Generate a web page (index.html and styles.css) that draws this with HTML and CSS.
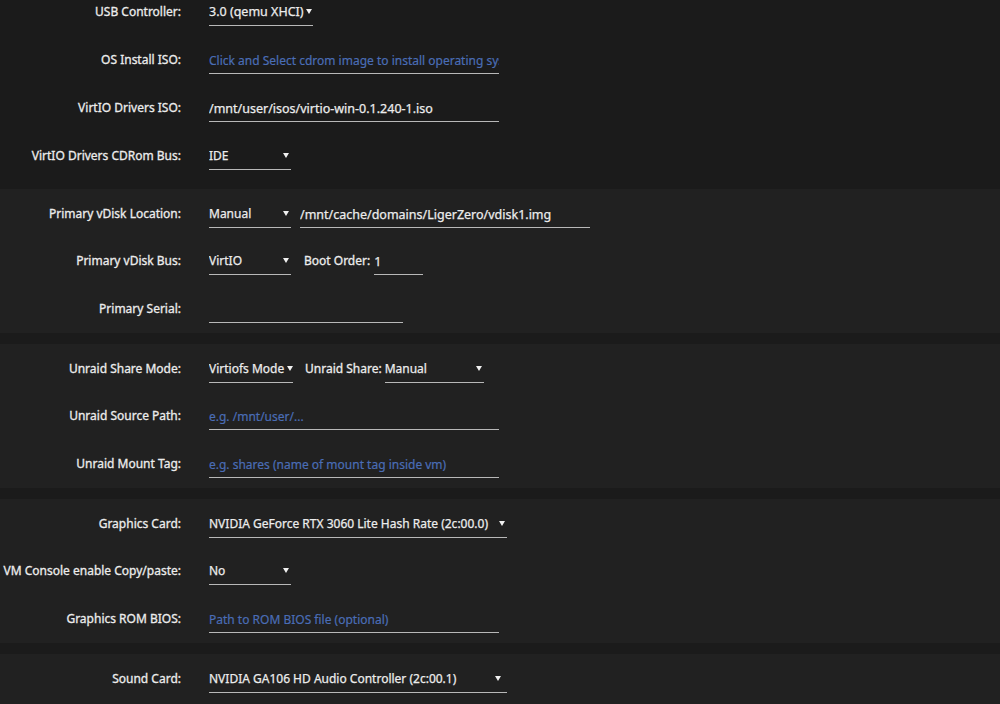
FILE: index.html
```html
<!DOCTYPE html>
<html lang="en">
<head>
<meta charset="utf-8">
<title>VM Settings</title>
<link rel="stylesheet" href="styles.css">
</head>
<body>
<div class="page">
  <section class="group plain">
    <div class="row">
      <div class="label">USB Controller:</div>
      <div class="field">
        <div class="select w-usb"><span class="sel-text">3.0 (qemu XHCI)</span><svg class="caret" viewBox="0 0 6 5" width="6" height="5"><polygon points="0,0 6,0 3,5"/></svg></div>
      </div>
    </div>
    <div class="row">
      <div class="label">OS Install ISO:</div>
      <div class="field">
        <input class="text w-long" type="text" placeholder="Click and Select cdrom image to install operating system">
      </div>
    </div>
    <div class="row">
      <div class="label">VirtIO Drivers ISO:</div>
      <div class="field">
        <input class="text w-long" type="text" value="/mnt/user/isos/virtio-win-0.1.240-1.iso">
      </div>
    </div>
    <div class="row">
      <div class="label">VirtIO Drivers CDRom Bus:</div>
      <div class="field">
        <div class="select w-small"><span class="sel-text">IDE</span><svg class="caret" viewBox="0 0 6 5" width="6" height="5"><polygon points="0,0 6,0 3,5"/></svg></div>
      </div>
    </div>
  </section>

  <section class="group">
    <div class="row">
      <div class="label">Primary vDisk Location:</div>
      <div class="field">
        <div class="select w-small"><span class="sel-text">Manual</span><svg class="caret" viewBox="0 0 6 5" width="6" height="5"><polygon points="0,0 6,0 3,5"/></svg></div>
        <input class="text w-long ml-9" type="text" value="/mnt/cache/domains/LigerZero/vdisk1.img">
      </div>
    </div>
    <div class="row">
      <div class="label">Primary vDisk Bus:</div>
      <div class="field">
        <div class="select w-small"><span class="sel-text">VirtIO</span><svg class="caret" viewBox="0 0 6 5" width="6" height="5"><polygon points="0,0 6,0 3,5"/></svg></div>
        <span class="inline-label boot">Boot Order:</span>
        <input class="text w-order" type="text" value="1">
      </div>
    </div>
    <div class="row">
      <div class="label">Primary Serial:</div>
      <div class="field">
        <input class="text w-serial" type="text" value="">
      </div>
    </div>
  </section>

  <section class="group">
    <div class="row">
      <div class="label">Unraid Share Mode:</div>
      <div class="field">
        <div class="select w-mode"><span class="sel-text">Virtiofs Mode</span><svg class="caret" viewBox="0 0 6 5" width="6" height="5"><polygon points="0,0 6,0 3,5"/></svg></div>
        <span class="inline-label share">Unraid Share:</span>
        <div class="select w-share"><span class="sel-text">Manual</span><svg class="caret" viewBox="0 0 6 5" width="6" height="5"><polygon points="0,0 6,0 3,5"/></svg></div>
      </div>
    </div>
    <div class="row">
      <div class="label">Unraid Source Path:</div>
      <div class="field">
        <input class="text w-long" type="text" placeholder="e.g. /mnt/user/...">
      </div>
    </div>
    <div class="row">
      <div class="label">Unraid Mount Tag:</div>
      <div class="field">
        <input class="text w-long" type="text" placeholder="e.g. shares (name of mount tag inside vm)">
      </div>
    </div>
  </section>

  <section class="group">
    <div class="row">
      <div class="label">Graphics Card:</div>
      <div class="field">
        <div class="select w-wide"><span class="sel-text">NVIDIA GeForce RTX 3060 Lite Hash Rate (2c:00.0)</span><svg class="caret" viewBox="0 0 6 5" width="6" height="5"><polygon points="0,0 6,0 3,5"/></svg></div>
      </div>
    </div>
    <div class="row">
      <div class="label">VM Console enable Copy/paste:</div>
      <div class="field">
        <div class="select w-small"><span class="sel-text">No</span><svg class="caret" viewBox="0 0 6 5" width="6" height="5"><polygon points="0,0 6,0 3,5"/></svg></div>
      </div>
    </div>
    <div class="row">
      <div class="label">Graphics ROM BIOS:</div>
      <div class="field">
        <input class="text w-long" type="text" placeholder="Path to ROM BIOS file (optional)">
      </div>
    </div>
  </section>

  <section class="group">
    <div class="row">
      <div class="label">Sound Card:</div>
      <div class="field">
        <div class="select w-wide sound"><span class="sel-text">NVIDIA GA106 HD Audio Controller (2c:00.1)</span><svg class="caret" viewBox="0 0 6 5" width="6" height="5"><polygon points="0,0 6,0 3,5"/></svg></div>
      </div>
    </div>
    <div class="row">
      <div class="label"></div>
      <div class="field"></div>
    </div>
    <div class="row">
      <div class="label"></div>
      <div class="field"></div>
    </div>
  </section>
</div>
</body>
</html>
```

FILE: styles.css
```css
* {
  box-sizing: border-box;
}

html, body {
  margin: 0;
  padding: 0;
  background: #1b1b1b;
  height: 100%;
  overflow: hidden;
}

body {
  font-family: "Noto Sans", "Open Sans", sans-serif;
  font-size: 12px;
  color: #e2e2e2;
}

.page {
  margin-top: -12px;
  display: flex;
  flex-direction: column;
  gap: 11px;
}

.group {
  background: #212121;
}

.group.plain {
  background: transparent;
  margin-bottom: -2px;
}

.row {
  display: grid;
  grid-template-columns: 181px 1fr;
  column-gap: 28px;
  height: 48px;
  align-items: center;
}

.group:not(.plain) .row:first-child {
  padding-top: 2px;
}

.label {
  text-align: right;
  white-space: nowrap;
  font-size: 12px;
  line-height: 20px;
  color: #ececec;
  -webkit-text-stroke: 0.3px #ececec;
}

.field {
  display: flex;
  align-items: center;
}

.text,
.select {
  height: 28px;
  padding: 4px 0 3px 0;
  border: none;
  border-bottom: 1px solid #b8b8b8;
  background: transparent;
  font-family: "Noto Sans", "Open Sans", sans-serif;
  font-size: 12.5px;
  line-height: 20px;
  color: #ececec;
  -webkit-text-stroke: 0.25px #ececec;
  outline: none;
  margin: 0;
}

.text::placeholder {
  color: #4a6db6;
  font-size: 12px;
  opacity: 1;
  -webkit-text-stroke: 0.2px #4a6db6;
}

.select {
  display: flex;
  align-items: center;
  padding-right: 2px;
  font-size: 12px;
}

.select.w-usb {
  font-size: 12.5px;
  padding-right: 1px;
}

.sel-text {
  flex: 1;
  min-width: 0;
  overflow: hidden;
  white-space: nowrap;
}

.caret {
  flex: none;
  display: block;
  margin-left: 2px;
  margin-top: -1px;
  fill: #f0f0f0;
}

.select.sound {
  padding-right: 6px;
}

.select.w-mode {
  padding-right: 0;
}

.select.w-mode .caret {
  margin-left: 1px;
}

.w-usb { width: 104px; }
.w-small { width: 82px; }
.w-mode { width: 84px; }
.w-share { width: 99px; }
.w-wide { width: 298px; }
.w-long { width: 290px; }
.w-serial { width: 194px; }
.w-order { width: 49px; }

.ml-9 { margin-left: 9px; }

.inline-label {
  font-size: 12px;
  line-height: 20px;
  color: #ececec;
  -webkit-text-stroke: 0.3px #ececec;
  white-space: nowrap;
}

.inline-label.boot {
  margin-left: 13px;
  margin-right: 4px;
}

.inline-label.share {
  margin-left: 12px;
  margin-right: 3px;
}
```
